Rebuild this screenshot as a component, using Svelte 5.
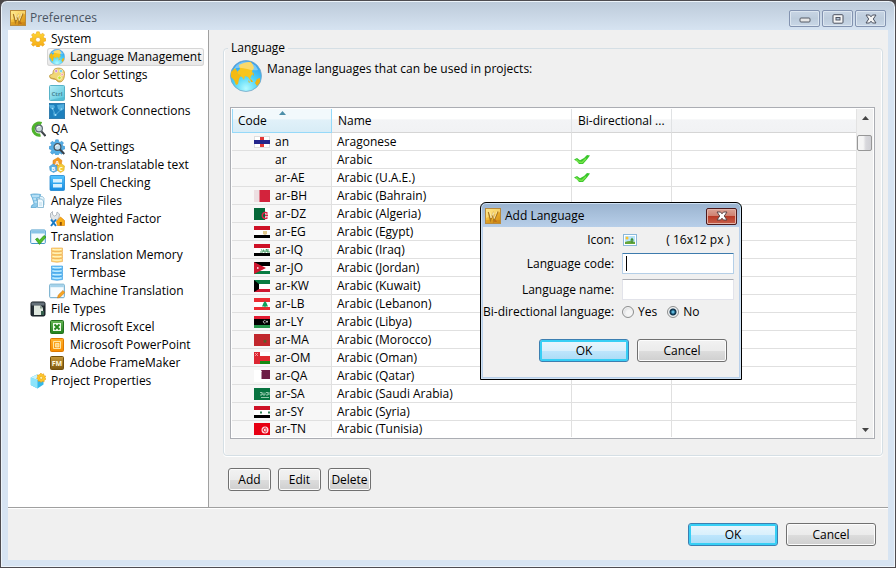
<script>
  const tree = [
    { icon: 'gear', label: 'System', children: [
      { icon: 'globe', label: 'Language Management', selected: true },
      { icon: 'palette', label: 'Color Settings' },
      { icon: 'ctrl', label: 'Shortcuts' },
      { icon: 'network', label: 'Network Connections' }
    ] },
    { icon: 'qa', label: 'QA', children: [
      { icon: 'qaSettings', label: 'QA Settings' },
      { icon: 'letters', label: 'Non-translatable text' },
      { icon: 'spell', label: 'Spell Checking' }
    ] },
    { icon: 'analyze', label: 'Analyze Files', children: [
      { icon: 'weighted', label: 'Weighted Factor' }
    ] },
    { icon: 'translation', label: 'Translation', children: [
      { icon: 'memory', label: 'Translation Memory' },
      { icon: 'termbase', label: 'Termbase' },
      { icon: 'machine', label: 'Machine Translation' }
    ] },
    { icon: 'fileTypes', label: 'File Types', children: [
      { icon: 'excel', label: 'Microsoft Excel' },
      { icon: 'powerpoint', label: 'Microsoft PowerPoint' },
      { icon: 'framemaker', label: 'Adobe FrameMaker' }
    ] },
    { icon: 'project', label: 'Project Properties', children: [] }
  ];

  const languages = [
    { code: 'an', name: 'Aragonese', flag: true },
    { code: 'ar', name: 'Arabic', bidi: true },
    { code: 'ar-AE', name: 'Arabic (U.A.E.)', bidi: true },
    { code: 'ar-BH', name: 'Arabic (Bahrain)', flag: true },
    { code: 'ar-DZ', name: 'Arabic (Algeria)', flag: true },
    { code: 'ar-EG', name: 'Arabic (Egypt)', flag: true },
    { code: 'ar-IQ', name: 'Arabic (Iraq)', flag: true },
    { code: 'ar-JO', name: 'Arabic (Jordan)', flag: true },
    { code: 'ar-KW', name: 'Arabic (Kuwait)', flag: true },
    { code: 'ar-LB', name: 'Arabic (Lebanon)', flag: true },
    { code: 'ar-LY', name: 'Arabic (Libya)', flag: true },
    { code: 'ar-MA', name: 'Arabic (Morocco)', flag: true },
    { code: 'ar-OM', name: 'Arabic (Oman)', flag: true },
    { code: 'ar-QA', name: 'Arabic (Qatar)', flag: true },
    { code: 'ar-SA', name: 'Arabic (Saudi Arabia)', flag: true },
    { code: 'ar-SY', name: 'Arabic (Syria)', flag: true },
    { code: 'ar-TN', name: 'Arabic (Tunisia)', flag: true }
  ];

  let bidirectional = $state('no');
  let languageCode = $state('');
  let languageName = $state('');
</script>

{#snippet appLogo()}
  <svg class="icon" viewBox="0 0 16 16" aria-hidden="true">
    <rect x=".5" y=".5" width="15" height="15" fill="url(#logoGold)" stroke="#b98a3c" />
    <path d="M1 1h14v3L1 10z" fill="#fff0a0" opacity=".5" />
    <path d="M3.500 4 5.500 12l2.500-6 1 6.500L13 3.500" fill="none" stroke="#a9781f" stroke-width="1.500" />
    <path d="M4.500 3.500 6 10l2.300-5.500.9 6L12 3.500" fill="none" stroke="#fff3bd" stroke-width=".8" />
    <path d="m9 14 1.500-3 1.500 3z" fill="#c4701a" />
    <path d="M1 12h14v3H1z" fill="#b5720f" opacity=".3" />
  </svg>
{/snippet}

{#snippet globe()}
  <svg class="globe" viewBox="0 0 32 32" aria-hidden="true">
    <circle cx="16" cy="16" r="15.500" fill="url(#ocean)" stroke="#77a5c5" stroke-width=".8" />
    <path d="M9 5c3-2 8-3.500 12-3l2 3 1 3-2 3 1 3-2 2-1 4-2-3-3-1-1 4-2-3-3-1-2-4 3-3z" fill="#f8c51c" />
    <path d="M1 12l4-4 2 3 1 3 3 1-2 4-1 5-2 1-2-5-3-3z" fill="#f3ba12" />
    <path d="M20 19l2 1 1 2-2 0zM18 20l2 2-1 1zM25 23l2-4 3-1 0 4-3 4zM23 12l1 3-1 1z" fill="#f0b210" />
    <path d="M4 9C7 3 12 1.500 16 1.500S26 4 28 10C20 12 12 5 4 9z" fill="#fff" opacity=".35" />
  </svg>
{/snippet}

{#snippet disks(light, mid, dark)}
  {#each [1, 4.5, 8, 11.5] as y}
    <path d="M2.500 {y}h11v3q-5.500 1.600-11 0z" fill={mid} stroke={dark} stroke-width=".6" />
    <path d="M3.500 {y + 1.2}q4.500 1.200 9 0" fill="none" stroke={light} stroke-width="1.100" />
  {/each}
{/snippet}

{#snippet gearShape(fill, edge)}
  <path d="M6.700.8h2.600l.4 2 1.300.6 1.800-1.200 1.700 1.800-1.200 1.800.6 1.300 1.900.4v2.500l-2 .4-.5 1.300 1.200 1.800-1.800 1.700-1.700-1.200-1.300.6-.4 1.900H6.700l-.4-2-1.300-.5-1.800 1.200-1.700-1.800 1.200-1.700L2.100 10.400.2 10V7.500l2-.4.500-1.300L1.500 4l1.700-1.700L5 3.400l1.300-.6z" {fill} stroke={edge} stroke-width=".5" />
{/snippet}

{#snippet icon(name)}
  {#if name === 'globe'}
    <span class="icon">{@render globe()}</span>
  {:else}
    <svg class="icon" viewBox="0 0 16 16" aria-hidden="true">
      {#if name === 'gear'}
        {@render gearShape('url(#gearGold)', '#e59a12')}
        <circle cx="8" cy="8.700" r="2.400" fill="#fff" stroke="#e0a020" stroke-width=".6" />
      {:else if name === 'palette'}
        <path d="M7 1.500c4-1.200 8.500.5 8.500 5 0 5-1.500 8-4.500 8.500-3 .3-3-2.500-5-2.800C3 12 .5 11.500.5 9.200.5 7.500 2.500 7.800 3.500 7 4.800 6 3 2.700 7 1.500z" fill="#f1d777" stroke="#b99233" stroke-width=".8" />
        <path d="M1 10c1.500 2 4 1 6 2.600 1.400 1.200 2.600 2.400 4.500 1.400" fill="none" stroke="#c9a040" />
        <circle cx="7.200" cy="4" r="1.500" fill="#c98ad8" stroke="#fff" stroke-width=".5" />
        <circle cx="12" cy="4" r="1.500" fill="#63d0e8" stroke="#fff" stroke-width=".5" />
        <circle cx="13.200" cy="7.500" r="1.200" fill="#f39ab4" stroke="#fff" stroke-width=".5" />
        <circle cx="10.500" cy="10.800" r="1.800" fill="#c6e62c" stroke="#fff" stroke-width=".6" />
      {:else if name === 'ctrl'}
        <rect x=".5" y=".5" width="15" height="15" rx="1" fill="url(#cyanKey)" stroke="#58b3c8" />
        <path d="M1 15h14v-3z" fill="#49b4cc" opacity=".6" />
        <text x="8" y="11" font-size="6" font-weight="700" text-anchor="middle" fill="#4a8799">Ctrl</text>
      {:else if name === 'network'}
        <rect x=".3" y=".3" width="15.400" height="15.400" fill="#1d80bd" stroke="#15649a" stroke-width=".6" />
        <path d="M0 2h5l1 2-2 3-3-2zM8 2l7-1v5l-3 2-3-2zM4 9l2 2-1 3z" fill="#5cb8e6" opacity=".8" />
        <path d="M3.500 5.500 6.500 12l6-6" fill="none" stroke="#7fcbf0" stroke-width=".6" />
        <circle cx="3.500" cy="5.500" r=".8" fill="#a4dff8" /><circle cx="6.500" cy="12" r="1" fill="#a4dff8" /><circle cx="12.500" cy="6" r=".8" fill="#a4dff8" />
      {:else if name === 'qa'}
        <path d="M11.500 2.600A6 6 0 1 0 10.500 14" fill="none" stroke="#4fb32c" stroke-width="3.200" />
        <circle cx="9" cy="7.500" r="3.400" fill="#c9d7d9" stroke="#5b6870" stroke-width="1.200" />
        <path d="M7 7q1-2 3-1.500" stroke="#fff" fill="none" />
        <path d="m11.500 10.500 4 4.500" stroke="#3e4449" stroke-width="2" />
      {:else if name === 'qaSettings'}
        {@render gearShape('#55aee5', '#2683c4')}
        <circle cx="8.500" cy="8" r="3.400" fill="#bfdcec" stroke="#46545f" stroke-width="1.200" />
        <path d="M6.500 7.500q1-2 3-1.500" stroke="#fff" fill="none" />
        <path d="m11 10.500 4.300 4.500" stroke="#39424a" stroke-width="2" />
      {:else if name === 'letters'}
        <path d="M4 3.500 9 .5l4 3-1 5-5 .5-3-2z" fill="#f39a25" stroke="#d97b10" stroke-width=".5" />
        <path d="m.5 9.500 3.500-2.500 4 2 .5 4.500-4 2-3.500-2z" fill="#5dafe2" stroke="#398cc5" stroke-width=".5" />
        <path d="m8.500 9 3.500-2.500 3.500 2.500-.5 4.500-3.500 2-3-2z" fill="#f3cb3a" stroke="#dca51a" stroke-width=".5" />
        <text x="8.200" y="7.500" font-size="6" font-weight="700" text-anchor="middle" fill="#fff">A</text>
        <text x="4.300" y="13.700" font-size="6" font-weight="700" text-anchor="middle" fill="#fff">B</text>
        <text x="12" y="13.700" font-size="6" font-weight="700" text-anchor="middle" fill="#fff">C</text>
      {:else if name === 'spell'}
        <rect x="1" y=".5" width="14.500" height="15" rx="1" fill="url(#blueTile)" stroke="#1c87d2" stroke-width=".8" />
        <path d="M4 4h9v3.500H4zM4 9h9v3.500H4z" fill="#d8f1ff" />
      {:else if name === 'analyze'}
        <path d="M.7 1.500c3-1 7-.5 10 0L9.500 5c-2-.6-3 0-2.500 2l1 3c.5 2-.5 4-2 4.500H1L2 12c2 0 2.200-1 1.600-3L2.300 5z" fill="#8cc9ea" stroke="#4d9fce" stroke-width=".7" />
        <path d="M2 3h7M3.500 6h2.500M4.500 9h2.500" stroke="#e0f5ff" />
        <path d="M9.500 3.500h3l1.500 1.700V12H9.500z" fill="#e4f4fc" stroke="#80b4d2" stroke-width=".7" />
        <path d="M7.500 6h4l2 2v6.500h-6z" fill="#f1faff" stroke="#76aecd" stroke-width=".8" />
        <path d="M9 10h3M9 12h3" stroke="#a5cde2" stroke-width=".7" />
      {:else if name === 'weighted'}
        <path d="M3.500.5v3l2 1.500 2-1 .5-3 2.500 2-.5 4-3 2.500H4L1.500 6V2.500z" fill="#e2e6e9" stroke="#9ba4ac" stroke-width=".7" />
        <path d="m7.500 10.500 4-4.500 4 3.500v5H8.500z" fill="#f9ae17" stroke="#df8509" stroke-width=".7" />
        <path d="M10.800 11h2v3.500h-2z" fill="#90540a" />
        <path d="M2 8.500 7 15M7 8.500 2 15" stroke="#167ac5" stroke-width="2" />
      {:else if name === 'translation'}
        <rect x=".7" y="1" width="14.600" height="13.500" rx="1" fill="#f4fbff" stroke="#4698c9" />
        <path d="M1.200 1.500h13.600v3H1.200z" fill="#89c5e7" />
        <path d="m5.500 10.300 2-1.300 2 2.300L14 6.500l2 1.600-6.500 7.300z" fill="#4fbf28" stroke="#278b18" stroke-width=".7" />
      {:else if name === 'memory'}
        {@render disks('#fff8cd', '#ffd978', '#eba64a')}
      {:else if name === 'termbase'}
        {@render disks('#d8f6ff', '#72c7fa', '#2c94df')}
      {:else if name === 'machine'}
        <rect x=".7" y="1.200" width="14.600" height="13.500" rx="1" fill="#f7fcff" stroke="#65a5c8" />
        <path d="M1.200 1.700h13.600v2.500H1.200z" fill="#a6d3eb" />
        <path d="m8.500 15 .8-3 4.700-4.500 1.800 2L11 14.300z" fill="#f6a623" stroke="#cf7716" stroke-width=".6" />
      {:else if name === 'fileTypes'}
        <rect x="1" y="1" width="14" height="14" rx="1.500" fill="#252e35" stroke="#121a21" />
        <path d="M1.500 1.500h13v3h-13z" fill="#647079" />
        <path d="M4 4.500h6.500l2.500 2.500v7H4z" fill="#dfe8df" />
        <path d="M10 4.500V7.500h3z" fill="#8c9f92" />
        <path d="M11 10h3v4h-3z" fill="#36604d" />
      {:else if name === 'excel'}
        <rect x="1.500" y="1.500" width="13" height="13" rx="1" fill="url(#greenTile)" stroke="#24711e" />
        <path d="M4 4h8v8H4z" fill="#eef9e9" />
        <path d="m5.500 5.500 5 5M10.500 5.500l-5 5" stroke="#23851b" stroke-width="1.800" />
      {:else if name === 'powerpoint'}
        <rect x="1.500" y="1.500" width="13" height="13" rx="1" fill="url(#orangeTile)" stroke="#df7900" />
        <path d="M4.500 4.500h7v7h-7z" fill="none" stroke="#ffe5a4" />
        <path d="M6.500 6.500h3.500v3.500h-3.500z" fill="#ffcf70" stroke="#fff1cc" stroke-width=".7" />
      {:else if name === 'framemaker'}
        <rect x="1.500" y="1.500" width="13" height="13" rx="1" fill="url(#brownTile)" stroke="#73500d" />
        <text x="8" y="10.800" font-size="7" font-weight="700" text-anchor="middle" fill="#fff7df">FM</text>
      {:else if name === 'project'}
        <path d="m.8 4.500 6.200-3 6.500 2.500v7.500l-6 4-6.700-3.500z" fill="#35b9e8" />
        <path d="m.8 4.500 6.700 2.500v8.500L.8 12z" fill="#8ce4fb" />
        <path d="m.8 4.500 6.200-3 6.500 2.500-6 3z" fill="#c7f5ff" />
        <path d="m11 0 1 1.500 1.700-.7.2 1.900 1.900.3-.8 1.700 1 1.500-1.800.8-.1 1.900-1.800-.6-1.300 1.300L9.900 8.100l-1.800.2.100-1.900-1.600-1 1.200-1.400-.5-1.900 1.800-.1z" fill="#ffc727" stroke="#e2930f" stroke-width=".5" />
        <circle cx="11.200" cy="4.800" r="1.500" fill="#fff1a5" stroke="#dd9b1c" stroke-width=".6" />
      {/if}
    </svg>
  {/if}
{/snippet}

{#snippet bands(top, middle, bottom)}
  <path d="M0 0h16v4H0z" fill={top} />
  <path d="M0 4h16v5H0z" fill={middle} />
  <path d="M0 9h16v3H0z" fill={bottom} />
{/snippet}

{#snippet flag(code)}
  <svg class="flag" viewBox="0 0 16 12" aria-hidden="true">
    {#if code === 'an'}
      <path d="M0 0h16v12H0z" fill="#dedede" /><path d="M1 1h14v10H1z" fill="#fff" />
      <path d="M6 1h4v10H6z" fill="#e33636" /><path d="M0 4h16v4H0z" fill="#24258b" />
    {:else if code === 'ar-BH'}
      <path d="M0 0h16v12H0z" fill="#eddfe2" /><path d="M5 0h11v12H5l1-1-1-1 1-1-1-1 1-1-1-1 1-1-1-1 1-1-1-1 1-1z" fill="#d3233c" />
    {:else if code === 'ar-DZ'}
      <path d="M0 0h16v12H0z" fill="#fff" /><path d="M0 0h11v12H0z" fill="#056839" />
      <path d="M13.500 5.500a3 3 0 1 0 0 4" fill="none" stroke="#dc2348" stroke-width="1.500" /><path d="M11 6.500h3v1.800h-3z" fill="#dc2348" />
    {:else if code === 'ar-EG'}
      {@render bands('#ce1126', '#fff', '#000')}<path d="M9 5h4v3l-2 1-2-1z" fill="#e0c98d" />
    {:else if code === 'ar-IQ'}
      {@render bands('#ce1126', '#fff', '#000')}<path d="M6 8h3V6h1v2h2V5.500h1V8h3M7 6h1M14 5v3" fill="none" stroke="#36965a" stroke-width=".9" />
    {:else if code === 'ar-JO'}
      {@render bands('#000', '#fff', '#087c42')}<path d="m0 0 12 6-12 6z" fill="#ce1730" /><path d="M3 5.200h1.500v1.500H3z" fill="#fff" />
    {:else if code === 'ar-KW'}
      {@render bands('#087c42', '#fff', '#ce1730')}<path d="m0 0 5 4v5l-5 3z" fill="#000" />
    {:else if code === 'ar-LB'}
      {@render bands('#ed2c32', '#fff', '#ed2c32')}<path d="m11 3 1.500 2L14 8.500h-2.500v1h-1v-1H8L9.500 5z" fill="#10a15b" />
    {:else if code === 'ar-LY'}
      {@render bands('#e31b32', '#000', '#26964b')}<path d="M0 3h16v6H0z" fill="#000" /><path d="M11.500 4.800a1.300 1.300 0 1 0 0 2M12.500 5.200h1v1h-1z" fill="none" stroke="#fff" stroke-width=".7" />
    {:else if code === 'ar-MA'}
      <path d="M0 0h16v12H0z" fill="#c1272d" /><path d="m11 5 .7 1.500h1.600L12 7.700l.5 1.500L11 8.300 9.500 9.200 10 7.700 8.700 6.500h1.600z" fill="#53622b" />
    {:else if code === 'ar-OM'}
      {@render bands('#fff', '#de2a2f', '#138b12')}<path d="M0 0h6v12H0z" fill="#dc2632" /><path d="m1 1 3 3M4 1 1 4" stroke="#f6afb0" stroke-width=".8" />
    {:else if code === 'ar-QA'}
      <path d="M0 0h16v12H0z" fill="#fff" /><path d="M7 0h9v9H7l1-1-1-1 1-1-1-1 1-1-1-1 1-1z" fill="#6c1d45" />
    {:else if code === 'ar-SA'}
      <path d="M0 0h16v12H0z" fill="#087441" /><path d="M6 4.500h2V7H6m3-2.500V7h2V4.500m1 0h2V7h-2m3-3v3M7 9.500h8" fill="none" stroke="#a5d1b9" stroke-width=".9" />
    {:else if code === 'ar-SY'}
      {@render bands('#ce1126', '#fff', '#000')}<path d="M6 5.500h2v2H6zM14 5.500h2v2h-2z" fill="#2f8156" />
    {:else if code === 'ar-TN'}
      <path d="M0 0h16v12H0z" fill="#e70013" /><circle cx="11" cy="7" r="3.500" fill="#ffdce0" />
      <path d="M12.500 5.500a2 2 0 1 0 0 3" fill="none" stroke="#e70013" /><path d="M11.500 6.500h1.500v1h-1.500z" fill="#e70013" />
    {/if}
  </svg>
{/snippet}

<svg class="defs" aria-hidden="true">
  <defs>
    <linearGradient id="logoGold" x2="1" y2="1"><stop stop-color="#ffe37a" /><stop offset=".5" stop-color="#f0b52c" /><stop offset="1" stop-color="#d08a18" /></linearGradient>
    <linearGradient id="gearGold" x2="0" y2="1"><stop stop-color="#ffd634" /><stop offset="1" stop-color="#f5aa15" /></linearGradient>
    <linearGradient id="cyanKey" x2="1" y2="1"><stop stop-color="#b6edf6" /><stop offset="1" stop-color="#54c5dc" /></linearGradient>
    <linearGradient id="blueTile" x2="0" y2="1"><stop stop-color="#55c5ff" /><stop offset="1" stop-color="#168be0" /></linearGradient>
    <linearGradient id="greenTile" x2="0" y2="1"><stop stop-color="#65b454" /><stop offset="1" stop-color="#21811d" /></linearGradient>
    <linearGradient id="orangeTile" x2="0" y2="1"><stop stop-color="#ffb02b" /><stop offset="1" stop-color="#f68c00" /></linearGradient>
    <linearGradient id="brownTile" x2="0" y2="1"><stop stop-color="#c6993c" /><stop offset="1" stop-color="#7e570d" /></linearGradient>
    <radialGradient id="ocean" cx=".5" cy=".9" r=".9"><stop stop-color="#b4fbff" /><stop offset=".45" stop-color="#4cd3f6" /><stop offset="1" stop-color="#2a98f0" /></radialGradient>
  </defs>
</svg>

<div class="window">
  <header class="titlebar">
    {@render appLogo()}
    <h1>Preferences</h1>
    <div class="controls">
      <button aria-label="Minimize"><svg viewBox="0 0 14 10"><rect x="2" y="4" width="10" height="4" rx="1" fill="#e7e7e7" stroke="#555b66" /></svg></button>
      <button aria-label="Maximize"><svg viewBox="0 0 14 10"><rect x="2" y=".7" width="10" height="8.500" rx="1" fill="#f4f4f4" stroke="#4c5260" /><rect x="5" y="3.500" width="4" height="2.500" fill="#b6c7da" stroke="#4c5260" /></svg></button>
      <button aria-label="Close"><svg viewBox="0 0 14 10"><path d="M2 1h3.500L7 2.800 8.500 1H12L9.300 5 12 9H8.500L7 7.200 5.500 9H2L4.700 5z" fill="#f4f4f4" stroke="#4c5260" /></svg></button>
    </div>
  </header>

  <div class="client">
    <div class="main">
      <nav aria-label="Preference pages">
        <ul>
          {#each tree as node}
            <li>
              <a class="node" href="#top">{@render icon(node.icon)}<span>{node.label}</span></a>
              {#if node.children.length}
                <ul class="children">
                  {#each node.children as child}
                    <li><a class="node" class:selected={child.selected} href="#top">{@render icon(child.icon)}<span>{child.label}</span></a></li>
                  {/each}
                </ul>
              {/if}
            </li>
          {/each}
        </ul>
      </nav>

      <main>
        <fieldset>
          <legend>Language</legend>
          <div class="group">
            <div class="intro">{@render globe()}<p>Manage languages that can be used in projects:</p></div>
            <div class="list">
              <div class="view">
                <table>
                  <colgroup><col class="code-col" /><col class="name-col" /><col class="bidi-col" /><col /></colgroup>
                  <thead>
                    <tr>
                      <th class="sorted" aria-sort="ascending">Code<svg class="sort" viewBox="0 0 7 4" aria-hidden="true"><path d="M0 4 3.500 0 7 4z" fill="#4d8fa9" /></svg></th>
                      <th>Name</th>
                      <th>Bi-directional ...</th>
                      <td class="filler"></td>
                    </tr>
                  </thead>
                  <tbody>
                    {#each languages as lang}
                      <tr>
                        <td><div class="code">{#if lang.flag}{@render flag(lang.code)}{:else}<span class="flag"></span>{/if}{lang.code}</div></td>
                        <td>{lang.name}</td>
                        <td class="bidi">
                          {#if lang.bidi}
                            <svg class="tick" viewBox="0 0 16 10" role="img" aria-label="Yes"><path d="M0 4.500 3 3l3 2.300L10 3l3-3 3 .5-3 4L9 9H5L3 6.500z" fill="#38c62c" /><path d="m2 4.500 3 2.500 3 .5 4-4" fill="none" stroke="#79e34a" stroke-width="1.500" /></svg>
                          {/if}
                        </td>
                        <td></td>
                      </tr>
                    {/each}
                  </tbody>
                </table>
              </div>
              <div class="scrollbar">
                <button aria-label="Scroll up"><svg viewBox="0 0 7 4"><path d="M0 4 3.500 0 7 4z" fill="#444" /></svg></button>
                <div class="track"><div class="thumb"></div></div>
                <button aria-label="Scroll down"><svg viewBox="0 0 7 4"><path d="M0 0h7L3.500 4z" fill="#444" /></svg></button>
              </div>
            </div>
          </div>
        </fieldset>
        <div class="actions">
          <button class="btn small">Add</button>
          <button class="btn small">Edit</button>
          <button class="btn small">Delete</button>
        </div>
      </main>
    </div>

    <footer>
      <button class="btn default">OK</button>
      <button class="btn">Cancel</button>
    </footer>
  </div>

  <div class="dialog" role="dialog" aria-labelledby="dialog-title">
    <header class="dialog-title">
      {@render appLogo()}
      <h2 id="dialog-title">Add Language</h2>
      <button class="close" aria-label="Close dialog"><svg viewBox="0 0 14 10"><path d="M2 1h3.500L7 2.800 8.500 1H12L9.300 5 12 9H8.500L7 7.200 5.500 9H2L4.700 5z" fill="#fff" stroke="#5b4546" /></svg></button>
    </header>
    <form onsubmit={(e) => e.preventDefault()}>
      <div class="fields">
        <label for="lang-icon">Icon:</label>
        <div class="icon-row">
          <button type="button" id="lang-icon" class="picker" aria-label="Choose icon">
            <svg viewBox="0 0 14 12" aria-hidden="true">
              <rect x=".5" y=".5" width="13" height="11" fill="#fff" stroke="#8ab8da" />
              <path d="M2 2h10v8H2z" fill="#b8e3fa" /><path d="M2 8q5-2 10 0v2H2z" fill="#65a63a" />
              <path d="m9 3.500 2 3H9.600V9H8.400V6.500H7z" fill="#3e8d32" /><circle cx="4" cy="4" r="1.500" fill="#ffc12b" />
            </svg>
          </button>
          <span>( 16x12 px )</span>
        </div>
        <label for="lang-code">Language code:</label>
        <input id="lang-code" class="text active" type="text" bind:value={languageCode} />
        <label for="lang-name">Language name:</label>
        <input id="lang-name" class="text" type="text" bind:value={languageName} />
        <span id="bidi-label">Bi-directional language:</span>
        <div class="radios" role="radiogroup" aria-labelledby="bidi-label">
          <label><input type="radio" name="bidi" value="yes" bind:group={bidirectional} />Yes</label>
          <label><input type="radio" name="bidi" value="no" bind:group={bidirectional} />No</label>
        </div>
      </div>
      <div class="dialog-buttons">
        <button class="btn default">OK</button>
        <button type="button" class="btn">Cancel</button>
      </div>
    </form>
  </div>
</div>

<style>
  :global(body) { background: #4a4748; }
  * { box-sizing: border-box; }
  .defs { position: absolute; width: 0; height: 0; }
  .window {
    position: relative; height: 100vh; display: flex; flex-direction: column;
    border: 1px solid #4e4c50; border-radius: 7px 7px 0 0; padding: 0 7px 7px;
    background: linear-gradient(#bccad9, #d7e4f2 30px); box-shadow: inset 0 0 0 1px #edf4fa;
    font: 12px/18px "Open Sans", "Noto Sans", sans-serif; color: #000;
  }
  button, input { font: inherit; color: inherit; }
  h1, h2, p, ul { margin: 0; padding: 0; font: inherit; list-style: none; }
  .icon { display: block; width: 16px; height: 16px; flex: none; }
  .icon .globe { display: block; width: 16px; height: 16px; }

  .titlebar { display: flex; align-items: flex-start; height: 29px; padding: 9px 2px 0; gap: 4px; flex: none; }
  .titlebar h1 { flex: 1; line-height: 16px; color: #4b5563; }
  .controls { display: flex; gap: 2px; }
  .controls button {
    width: 31px; height: 17px; padding: 0; border: 1px solid #8393b0; border-radius: 2px;
    background: linear-gradient(#c8d5e4, #bdccdc 50%, #c9d7e6); box-shadow: inset 0 0 0 1px #dce6f0;
    display: flex; align-items: center; justify-content: center;
  }
  .controls svg, .close svg { width: 14px; height: 10px; flex: none; }

  .client { flex: 1; min-height: 0; display: flex; flex-direction: column; background: #f0f0f0; }
  .main { flex: 1; min-height: 0; display: flex; }
  nav { width: 201px; flex: none; background: #fff; border-right: 1px solid #a0a0a0; }
  nav > ul { padding-left: 20px; }
  .children { padding-left: 19px; }
  li { display: block; }
  .node {
    display: flex; align-items: center; width: max-content; height: 18px; gap: 5px;
    padding: 0 3px 0 2px; border-radius: 3px; color: inherit; text-decoration: none; white-space: nowrap;
  }
  .selected { background: linear-gradient(#fafafa, #e6e6e6); box-shadow: inset 0 0 0 1px #d6d6d6; }

  main { flex: 1; min-width: 0; display: flex; flex-direction: column; padding: 9px 5px 16px 14px; }
  fieldset {
    flex: 1; min-width: 0; min-height: 0; margin: 0; padding: 0 7px 16px 6px;
    border: 1px solid #d5dfe5; border-radius: 4px; box-shadow: inset 1px 0 #fff, inset -1px 0 #fff, 0 1px #fff;
    display: flex; flex-direction: column;
  }
  legend { padding: 0 3px; margin-left: -2px; height: 18px; }
  .group { height: 100%; min-height: 0; display: flex; flex-direction: column; }
  .intro { display: flex; gap: 5px; height: 50px; padding-top: 3px; flex: none; }
  .intro .globe { width: 32px; height: 32px; flex: none; }
  .list { flex: 1; min-height: 0; display: flex; padding: 1px 1px 0; border: 1px solid #abadb3; background: #fff; }
  .view { flex: 1; min-width: 0; overflow: hidden; }
  table { width: 100%; table-layout: fixed; border-collapse: separate; border-spacing: 0; }
  .code-col { width: 100px; }
  .name-col { width: 240px; }
  .bidi-col { width: 100px; }
  thead th, thead .filler {
    height: 24px; padding: 1px 6px 0; text-align: left; font-weight: 400;
    background: linear-gradient(#fff 45%, #f3f4f6 46%, #f1f2f4); border-right: 1px solid #e0e2e4; border-bottom: 1px solid #d5d5d5;
    white-space: nowrap;
  }
  thead .filler { border-right: 0; }
  thead .sorted {
    position: relative; padding-left: 5px; border: 1px solid #96d9f9; border-top: 0;
    background: linear-gradient(#f2f9fc 45%, #e1f1f9 46%, #d8ecf6);
  }
  .sort { position: absolute; top: 2px; left: 46px; width: 7px; height: 4px; }
  tbody td { height: 18px; padding: 0 5px; line-height: 16px; border-right: 1px solid #e0e0e0; border-bottom: 1px solid #e0e0e0; white-space: nowrap; }
  tbody tr:last-child td { height: 16px; border-bottom: 0; }
  tbody td:first-child { background: #f7f7f7; padding-left: 22px; }
  tbody td:last-child { border-right: 0; }
  .code { display: flex; align-items: center; gap: 5px; }
  .flag { width: 16px; height: 12px; flex: none; }
  tbody .bidi { padding: 0 2px; }
  .tick { display: block; width: 16px; height: 10px; }
  .scrollbar { width: 17px; flex: none; display: flex; flex-direction: column; background: #f0f0f0; border-left: 1px solid #e3e3e3; }
  .scrollbar button { height: 17px; padding: 0; border: 0; background: none; display: flex; align-items: center; justify-content: center; }
  .scrollbar svg { width: 7px; height: 4px; }
  .track { flex: 1; padding-top: 9px; }
  .thumb { height: 16px; margin-right: 1px; border: 1px solid #979797; border-radius: 2px; background: linear-gradient(90deg, #f5f5f5 40%, #d8d8dc 60%, #cfcfd4); }

  .btn {
    width: 90px; height: 23px; padding: 0; line-height: 19px; text-align: center;
    border: 1px solid #707070; border-radius: 3px;
    background: linear-gradient(#f2f2f2, #ebebeb 50%, #dddddd 51%, #cfcfcf); box-shadow: inset 0 0 0 1px #fcfcfc;
  }
  .btn.small { width: 43px; }
  .btn.default {
    border-color: #3c7fb1; background: linear-gradient(#eaf6fd, #d9f0fc 50%, #bee6fd 51%, #a9dbf5);
    box-shadow: inset 0 0 0 2px #37cff5;
  }
  .actions { display: flex; gap: 7px; padding: 12px 0 0 5px; flex: none; }
  footer { flex: none; display: flex; justify-content: flex-end; gap: 8px; padding: 15px 12px 14px; border-top: 1px solid #a0a0a0; box-shadow: inset 0 1px #fff; }

  .dialog {
    position: absolute; left: 479px; top: 201px; width: 262px; padding: 0 1px 1px;
    border: 1px solid #000; border-radius: 6px 6px 0 0; background: linear-gradient(#9ab3cf, #b9d0ea 25px);
    box-shadow: inset 0 0 0 1px #cfe1f3, inset -1px -1px #2fd5f2;
  }
  .dialog-title { display: flex; align-items: center; height: 24px; padding: 2px 3px 0; gap: 4px; }
  .dialog-title h2 { flex: 1; }
  .close {
    width: 31px; height: 17px; padding: 0; border: 1px solid #4e1a1c; border-radius: 2px;
    background: linear-gradient(#dba396, #cf8171 45%, #b93a26 50%, #c7604c); box-shadow: inset 0 0 0 1px #e3b3a8;
    display: flex; align-items: center; justify-content: center;
  }
  form { padding: 5px 5px 15px 0; margin: 0 1px 1px; background: #f0f0f0; }
  .fields { display: grid; grid-template-columns: 1fr 112px; column-gap: 8px; row-gap: 5px; align-items: center; justify-items: end; line-height: 14px; white-space: nowrap; }
  .fields > div, .fields > .text { justify-self: stretch; }
  .icon-row { display: flex; align-items: center; justify-content: space-between; height: 16px; padding: 0 4px 0 1px; }
  .picker { width: 14px; height: 12px; padding: 0; border: 0; background: none; }
  .picker svg { display: block; width: 14px; height: 12px; }
  .text { width: 100%; height: 21px; padding: 0 4px; border: 1px solid #e2e3ea; border-top-color: #abadb3; border-radius: 1px; background: #fff; outline: 0; }
  .text.active { border-color: #b5cfe7; border-top-color: #3d7bad; background: linear-gradient(#000, #000) 3px 2px / 1px 15px no-repeat #fff; }
  .radios { display: flex; gap: 10px; height: 14px; }
  .radios label { display: flex; align-items: center; gap: 4px; }
  .radios input {
    appearance: none; width: 12px; height: 12px; margin: 0; border: 1px solid #8e8f8f; border-radius: 50%;
    background: radial-gradient(circle at 60% 60%, #f5f5f5 30%, #c5c9cd); box-shadow: inset 0 0 0 1px #f4f4f4;
  }
  .radios input:checked { background: radial-gradient(circle at 50% 50%, #5fb8dc 0 1px, #17506f 2px, #102f46 3px, #dce4e8 4px); }
  .dialog-buttons { display: flex; justify-content: flex-end; gap: 8px; padding: 20px 7px 0 0; }
</style>
